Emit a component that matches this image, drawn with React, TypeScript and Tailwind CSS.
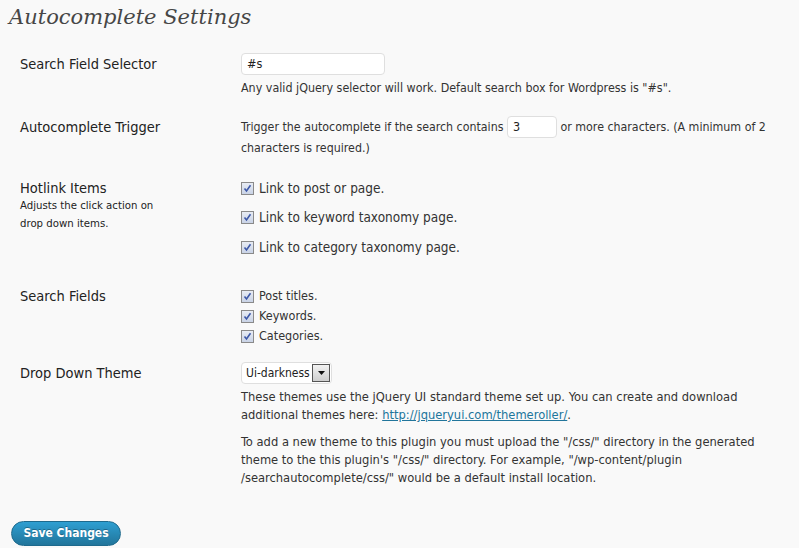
import React from "react";

const font = { fontFamily: "Tahoma, 'DejaVu Sans Condensed', 'DejaVu Sans', sans-serif" };

function Check({ label, small, h }: { label: string; small?: boolean; h: string }) {
  return (
    <div className={"flex items-center " + h}>
      <span className="w-[13px] h-[13px] border border-[#8a8a8a] bg-gradient-to-b from-[#e8ecf4] to-[#c9d3e6] flex items-center justify-center shrink-0">
        <svg width="9" height="9" viewBox="0 0 9 9">
          <path d="M1.5 4.5 L3.5 7 L7.5 1.2" stroke="#3d58a8" strokeWidth="1.6" fill="none" />
        </svg>
      </span>
      <span className={small ? "ml-[5px] text-[12.5px] text-[#333]" : "ml-[5px] text-[13.5px] text-[#333]"}>{label}</span>
    </div>
  );
}

export default function App() {
  return (
    <div className="w-[799px] h-[548px] bg-[#f9f9f9] overflow-hidden text-[#333]" style={font}>
      <h2
        className="pl-[9px] text-[21px] italic text-[#464646] leading-[34px] h-[34px]"
        style={{ fontFamily: "Georgia, 'DejaVu Serif', serif" }}
      >
        Autocomplete Settings
      </h2>

      {/* Row 1 */}
      <div className="flex mt-[19px]">
        <div className="w-[241px] pl-[20px] text-[14.5px] leading-[22px] text-[#222]">Search Field Selector</div>
        <div>
          <div className="w-[144px] h-[22px] bg-white border border-[#dfdfdf] rounded-[4px] text-[12.5px] pl-[5px] flex items-center text-[#222]">#s</div>
          <div className="text-[12.4px] mt-[4px] leading-[18px]">Any valid jQuery selector will work. Default search box for Wordpress is "#s".</div>
        </div>
      </div>

      {/* Row 2 */}
      <div className="flex mt-[19px]">
        <div className="w-[241px] pl-[20px] text-[14.5px] leading-[22px] text-[#222]">Autocomplete Trigger</div>
        <div className="w-[550px] text-[12.3px] leading-[21px]">
          Trigger the autocomplete if the search contains{" "}
          <span className="inline-flex align-middle w-[50px] h-[22px] bg-white border border-[#dfdfdf] rounded-[4px] pl-[5px] items-center text-[#222] text-[12.5px] leading-[20px]">3</span>{" "}
          or more characters. (A minimum of 2 characters is required.)
        </div>
      </div>

      {/* Row 3 */}
      <div className="flex mt-[20px]">
        <div className="w-[241px] pl-[20px] text-[#222]">
          <div className="text-[14.5px] leading-[18px]">Hotlink Items</div>
          <div className="text-[11.3px] leading-[18px]">Adjusts the click action on<br />drop down items.</div>
        </div>
        <div className="flex flex-col gap-[11.5px]">
          <Check label="Link to post or page." h="h-[18px]" />
          <Check label="Link to keyword taxonomy page." h="h-[18px]" />
          <Check label="Link to category taxonomy page." h="h-[18px]" />
        </div>
      </div>

      {/* Row 4 */}
      <div className="flex mt-[30px]">
        <div className="w-[241px] pl-[20px] text-[14.5px] leading-[20px] text-[#222]">Search Fields</div>
        <div className="flex flex-col">
          <Check label="Post titles." small h="h-[20px]" />
          <Check label="Keywords." small h="h-[20px]" />
          <Check label="Categories." small h="h-[20px]" />
        </div>
      </div>

      {/* Row 5 */}
      <div className="flex mt-[16px]">
        <div className="w-[241px] pl-[20px] text-[14.5px] leading-[22px] text-[#222]">Drop Down Theme</div>
        <div className="w-[550px]">
          <div className="w-[91px] h-[22px] bg-white border border-[#dfdfdf] rounded-[4px] flex items-center pl-[4px] text-[12px] text-[#222] whitespace-nowrap overflow-hidden">
            <span className="whitespace-nowrap">Ui-darkness</span>
            <span className="ml-auto mr-[1px] w-[18px] h-[18px] border border-[#555] bg-gradient-to-b from-[#f2f2f2] to-[#cfcfcf] flex items-center justify-center shrink-0">
              <svg width="7" height="4" viewBox="0 0 7 4"><path d="M0 0 H7 L3.5 4 Z" fill="#111" /></svg>
            </span>
          </div>
          <p className="text-[12.8px] leading-[18px] mt-[4px]">
            These themes use the jQuery UI standard theme set up. You can create and download additional themes here:{" "}
            <a className="text-[#21759b] underline">http://jqueryui.com/themeroller/</a>.
          </p>
          <p className="text-[12.8px] leading-[18px] mt-[9px]">
            To add a new theme to this plugin you must upload the "/css/" directory in the generated theme to the this plugin's "/css/" directory. For example, "/wp-content/plugin<br />/searchautocomplete/css/" would be a default install location.
          </p>
        </div>
      </div>

      <div className="pl-[11px] mt-[33px]">
        <button className="w-[110px] h-[25px] rounded-full bg-gradient-to-b from-[#2e9fd2] to-[#21759b] border border-[#1e6a8d] text-white text-[12px] font-bold leading-[23px]" style={{ textShadow: "0 -1px 0 rgba(0,0,0,0.3)" }}>
          Save Changes
        </button>
      </div>
    </div>
  );
}
